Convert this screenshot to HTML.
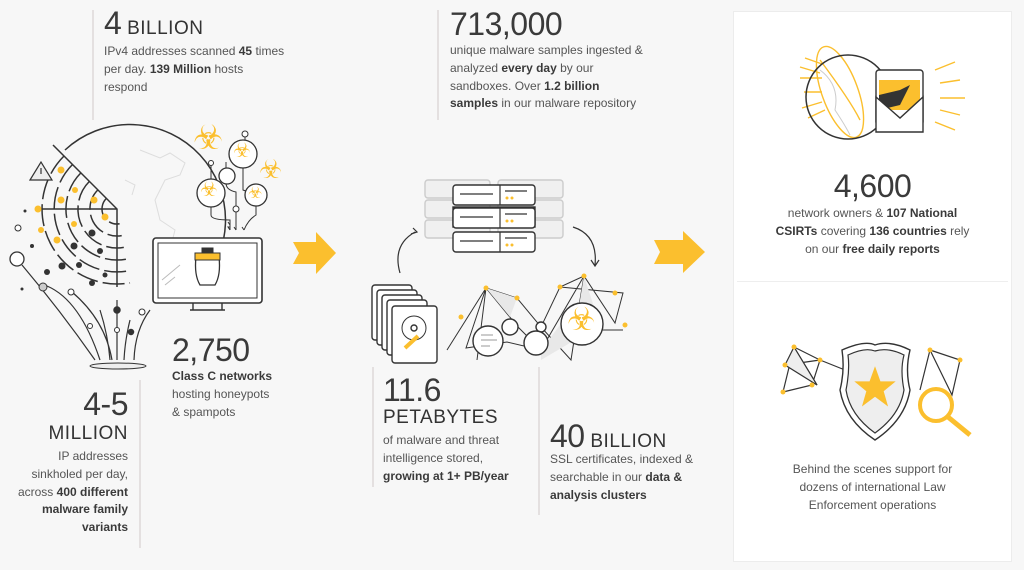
<!DOCTYPE html>
<html><head><meta charset="utf-8">
<style>
*{margin:0;padding:0;box-sizing:border-box}
body{width:1024px;height:570px;background:#f7f7f7;font-family:"Liberation Sans",sans-serif;color:#4a4a4a;position:relative;overflow:hidden}
.a{position:absolute}
.t{font-size:12px;line-height:17.8px;color:#555;letter-spacing:0;white-space:nowrap}
.t b{color:#3a3a3a}
.n{font-size:32px;font-weight:300;color:#3a3a3a;line-height:1;letter-spacing:-.5px}
.u{font-size:19px;color:#333;letter-spacing:.5px}
.vl{position:absolute;width:2px;background:#e4e0e0}
.card{position:absolute;left:733px;top:11px;width:279px;height:551px;background:#fff;border:1px solid #ececec}
.c{text-align:center}
</style></head><body>

<div class="vl" style="left:92px;top:10px;height:110px"></div>
<div class="a" style="left:104px;top:7px"><span class="n">4</span><span class="u"> BILLION</span></div>
<div class="a t" style="left:104px;top:43px">IPv4 addresses scanned <b>45</b> times<br>per day. <b>139 Million</b> hosts<br>respond</div>

<div class="vl" style="left:437px;top:10px;height:110px"></div>
<div class="a n" style="left:450px;top:8px">713,000</div>
<div class="a t" style="left:450px;top:42px">unique malware samples ingested &amp;<br>analyzed <b>every day</b> by our<br>sandboxes. Over <b>1.2 billion</b><br><b>samples</b> in our malware repository</div>

<div class="a n" style="left:172px;top:334px">2,750</div>
<div class="a t" style="left:172px;top:368px"><b>Class C networks</b><br>hosting honeypots<br>&amp; spampots</div>

<div class="vl" style="left:139px;top:380px;height:168px"></div>
<div class="a n" style="left:20px;top:388px;width:108px;text-align:right">4-5</div>
<div class="a u" style="left:20px;top:423px;width:108px;text-align:right">MILLION</div>
<div class="a t" style="left:0px;top:448px;width:128px;text-align:right">IP addresses<br>sinkholed per day,<br>across <b>400 different</b><br><b>malware family</b><br><b>variants</b></div>

<div class="vl" style="left:372px;top:367px;height:120px"></div>
<div class="a n" style="left:383px;top:374px">11.6</div>
<div class="a u" style="left:383px;top:407px">PETABYTES</div>
<div class="a t" style="left:383px;top:432px">of malware and threat<br>intelligence stored,<br><b>growing at 1+ PB/year</b></div>

<div class="vl" style="left:538px;top:367px;height:148px"></div>
<div class="a" style="left:550px;top:420px"><span class="n">40</span><span class="u"> BILLION</span></div>
<div class="a t" style="left:550px;top:451px">SSL certificates, indexed &amp;<br>searchable in our <b>data &amp;</b><br><b>analysis clusters</b></div>

<!-- arrows -->
<svg class="a" style="left:290px;top:230px" width="50" height="50"><path d="M3 12H26V2L46 23L26 44V34H3L9 23Z" fill="#fbbf2e"/></svg>
<svg class="a" style="left:651px;top:230px" width="56" height="46"><path d="M3 10H32V1L54 22L32 43V34H3L9 22Z" fill="#fbbf2e"/></svg>

<!-- left illustration (svg origin at page 0,120) -->
<svg class="a" style="left:0;top:120px" width="300" height="250" fill="none" stroke="#333" stroke-width="1.5">
<path d="M65 30 A92 92 0 0 1 195 170" />
<g stroke="#ddd" stroke-width="1"><path d="M140 30 l20 8 l10 -5 l15 10 l-5 12 l-15 5 l-10 20 l5 20 l15 10 l-5 20"/><path d="M125 60 l10 5 l-3 10"/></g>
<g stroke-dasharray="22 5">
<path d="M106.4 78.4 A15 15 0 0 0 119.6 103.8"/>
<path d="M97.9 69.9 A27 27 0 0 0 121.7 115.6"/>
<path d="M89.4 61.4 A39 39 0 0 0 123.8 127.4"/>
<path d="M80.9 52.9 A51 51 0 0 0 125.9 139.2"/>
<path d="M72.5 44.5 A63 63 0 0 0 127.9 151"/>
<path d="M64 36 A75 75 0 0 0 130 162.9"/>
</g>
<path d="M53 25 L117 89 V167 M38 89 H117"/>
<path d="M30 60 L41 42 L52 60Z" fill="#eee" stroke-width="1.2"/>
<path d="M41 48 V54" stroke-width="1.2"/>
<g fill="#fbbf2e" stroke="none"><circle cx="61" cy="50" r="3.5"/><circle cx="75" cy="70" r="3"/><circle cx="61" cy="80" r="3.5"/><circle cx="94" cy="80" r="3.5"/><circle cx="38" cy="89" r="3.5"/><circle cx="105" cy="97" r="3.5"/><circle cx="41" cy="110" r="3"/><circle cx="74" cy="104" r="3"/><circle cx="57" cy="120" r="3.5"/></g>
<g fill="#333" stroke="none"><circle cx="92" cy="113" r="3.5"/><circle cx="74" cy="126" r="3.5"/><circle cx="100" cy="131" r="3"/><circle cx="62" cy="146" r="3.5"/><circle cx="79" cy="145" r="3"/><circle cx="47" cy="152" r="3"/><circle cx="92" cy="163" r="3"/><circle cx="105" cy="155" r="2.5"/><circle cx="25" cy="91" r="1.5"/><circle cx="32" cy="126" r="2"/><circle cx="22" cy="169" r="1.5"/></g>
<circle cx="18" cy="108" r="3" fill="#fff" stroke-width="1"/>
<circle cx="17" cy="139" r="7" fill="#fff" stroke-width="1.3"/>
<path d="M22 145 Q60 190 95 240M47 166 Q80 180 100 240M72 172 Q105 200 112 240M117 180 V240M130 200 Q125 220 124 240M150 190 Q135 210 134 240M100 190 Q108 215 110 240" stroke-width="1.2"/>
<circle cx="43" cy="167" r="4" fill="#ccc" stroke-width="1"/><circle cx="71" cy="172" r="3" fill="#fff" stroke-width="1"/><circle cx="117" cy="190" r="3" fill="#333"/><circle cx="142" cy="192" r="3" fill="#fff" stroke-width="1"/><circle cx="90" cy="206" r="2.5" fill="#fff" stroke-width="1"/><circle cx="117" cy="210" r="2.5" fill="#fff" stroke-width="1"/><circle cx="131" cy="212" r="2.5" fill="#333"/>
<path d="M211 45 V65 M245 13 V20 M226 42 V63 Q226 70 236 72 V110 M211 87 V95 Q211 100 230 100 V110 M256 86 V95 Q248 100 244 110 M243 48 V70 Q255 75 256 64" stroke-width="1"/>
<circle cx="211" cy="73" r="14" fill="#fff" stroke-width="1.3"/><circle cx="243" cy="34" r="14" fill="#fff" stroke-width="1.3"/><circle cx="256" cy="75" r="11" fill="#fff" stroke-width="1.3"/><circle cx="227" cy="56" r="8" fill="#fff" stroke-width="1.3"/>
<circle cx="245" cy="14" r="3" fill="#fff" stroke-width="1"/><circle cx="211" cy="43" r="2.5" fill="#fff" stroke-width="1"/><circle cx="236" cy="89" r="3" fill="#fff" stroke-width="1"/>
<path d="M230 105 l-2 -3 M230 110 l-2 -3 l2 0 M236 110 l-2 -3 M244 110 l-2 -3" stroke-width="1"/>
</svg>
<div class="a" style="left:193px;top:121px;font-size:34px;color:#fbbf2e;line-height:1">☣</div>
<div class="a" style="left:200px;top:180px;font-size:20px;color:#fbbf2e;line-height:1">☣</div>
<div class="a" style="left:233px;top:141px;font-size:20px;color:#fbbf2e;line-height:1">☣</div>
<div class="a" style="left:248px;top:186px;font-size:16px;color:#fbbf2e;line-height:1">☣</div>
<div class="a" style="left:259px;top:156px;font-size:26px;color:#fbbf2e;line-height:1">☣</div>
<svg class="a" style="left:150px;top:235px" width="120" height="80" fill="none" stroke="#333">
<rect x="3" y="3" width="109" height="65" rx="3" fill="#fff" stroke-width="1.6"/>
<rect x="8" y="8" width="99" height="55" stroke-width="1"/>
<path d="M43 75 V68 M72 75 V68 M40 75 H75" stroke-width="1.4"/>
<path d="M12 45 L30 30 M15 50 L25 42" stroke="#bbb"/>
<path d="M46 22 Q44 40 50 50 H65 Q71 40 69 22Z" fill="#fff" stroke-width="1.3"/>
<path d="M45 18 H70 V25 H45Z" fill="#fbbf2e" stroke-width="1"/>
<path d="M52 13 H63 V18 H52Z" fill="#333"/>
</svg>
<svg class="a" style="left:85px;top:360px" width="70" height="15"><ellipse cx="33" cy="6" rx="28" ry="3" fill="#eee" stroke="#333" stroke-width="1"/></svg>

<!-- middle illustration -->
<svg class="a" style="left:360px;top:170px" width="300" height="200" fill="none" stroke="#333" stroke-width="1.4">
<g fill="#f0f0f0" stroke="#ccc"><rect x="65" y="10" width="65" height="18" rx="3"/><rect x="65" y="30" width="65" height="18" rx="3"/><rect x="65" y="50" width="65" height="18" rx="3"/><rect x="138" y="10" width="65" height="18" rx="3"/><rect x="138" y="30" width="65" height="18" rx="3"/><rect x="138" y="50" width="65" height="18" rx="3"/></g>
<rect x="93" y="37" width="82" height="20" fill="#333"/>
<g fill="#fff"><rect x="93" y="15" width="82" height="20" rx="3"/><rect x="93" y="38" width="82" height="20" rx="3"/><rect x="93" y="62" width="82" height="20" rx="3"/></g>
<path d="M140 15 V35 M140 38 V58 M140 62 V82 M100 24 H133 M100 47 H133 M100 71 H133 M145 21 H167 M145 44 H167 M145 68 H167" stroke-width="1.2"/>
<g fill="#fbbf2e" stroke="none"><circle cx="147" cy="28" r="1.5"/><circle cx="152" cy="28" r="1.5"/><circle cx="147" cy="51" r="1.5"/><circle cx="152" cy="51" r="1.5"/><circle cx="147" cy="75" r="1.5"/><circle cx="152" cy="75" r="1.5"/></g>
<path d="M40 103 Q32 75 55 62 M53 58 L57 62 L51 64" stroke-width="1.2"/>
<path d="M213 57 Q238 65 235 95 M231 90 L235 96 L239 90" stroke-width="1.2"/>
<g fill="#fff"><rect x="12" y="115" width="40" height="55" rx="3"/><rect x="17" y="120" width="40" height="55" rx="3"/><rect x="22" y="125" width="40" height="55" rx="3"/><rect x="27" y="130" width="40" height="55" rx="3"/><rect x="32" y="136" width="45" height="57" rx="3"/></g>
<circle cx="54" cy="158" r="12" fill="#fff" stroke-width="1"/><circle cx="54" cy="158" r="3"/>
<path d="M45 178 L58 166" stroke="#fbbf2e" stroke-width="4"/>
<g stroke-width="1"><path d="M126 118 L158 157 L181 180 L147 172 L106 178 L126 118 L117 190 M126 118 L87 180 M126 118 L157 128 L181 157 L200 117 L224 106 L211 190 L181 157 M200 117 L263 123 L255 153 L224 106 L181 180 M224 106 L215 160 L263 160"/></g>
<path d="M126 118 L157 128 L150 147Z M181 180 L200 155 L215 170 L181 190Z M224 106 L235 140 L215 160Z" fill="#e8e8e8" stroke="none"/>
<circle cx="150" cy="157" r="8" fill="#fff"/><circle cx="181" cy="157" r="5" fill="#fff"/>
<circle cx="128" cy="171" r="15" fill="#fff"/><path d="M121 165 H133 M121 170 H137 M121 176 H130" stroke="#999" stroke-width="1"/>
<circle cx="176" cy="173" r="12" fill="#fff"/>
<circle cx="222" cy="154" r="21" fill="#fff"/>
<g fill="#fbbf2e" stroke="none"><circle cx="126" cy="118" r="2.5"/><circle cx="157" cy="128" r="2.5"/><circle cx="200" cy="117" r="2.5"/><circle cx="224" cy="106" r="2.5"/><circle cx="255" cy="123" r="2.5"/><circle cx="265" cy="155" r="2.5"/><circle cx="101" cy="147" r="2.5"/></g>
</svg>
<div class="a" style="left:567px;top:303px;font-size:32px;color:#fbbf2e;line-height:1">☣</div>

<!-- card -->
<div class="card"></div>
<div class="a" style="left:737px;top:281px;width:271px;height:1px;background:#eee"></div>
<svg class="a" style="left:780px;top:40px" width="190" height="110" fill="none" stroke="#333">
<g stroke="#fbbf2e" stroke-width="1.4"><path d="M20 38 H42 M24 52 H42 M20 27 L40 33 M22 68 L42 62 M28 78 L45 70 M25 18 L42 24 M155 30 L175 22 M160 43 L180 40 M160 58 L185 58 M160 70 L180 75 M155 82 L175 90"/>
<ellipse cx="60" cy="52" rx="18" ry="48" transform="rotate(-20 60 52)"/><path d="M40 20 Q70 60 80 80"/></g>
<circle cx="68" cy="57" r="42" stroke-width="1.5"/>
<path d="M40 30 Q60 45 55 70 Q65 85 70 95" stroke="#ccc"/>
<rect x="96" y="30" width="47" height="55" rx="3" fill="#fff" stroke-width="1.4"/>
<path d="M99 40 H140 V70 H99Z" fill="#fbbf2e" stroke="none"/>
<path d="M99 55 L120 50 L130 45 L120 65 L99 70Z" fill="#333" stroke="none"/>
<path d="M96 57 L120 78 L143 57 V92 H96Z" fill="#fff" stroke-width="1.4"/>
</svg>
<div class="a n c" style="left:733px;top:170px;width:279px">4,600</div>
<div class="a t c" style="left:733px;top:205px;width:279px">network owners &amp; <b>107 National<br>CSIRTs</b> covering <b>136 countries</b> rely<br>on our <b>free daily reports</b></div>
<svg class="a" style="left:780px;top:340px" width="200" height="105" fill="none" stroke="#333" stroke-width="1.2">
<path d="M14 7 L40 20 L32 45 L3 52 L14 7 L37 45 M5 25 L40 20 M40 20 L65 30 M150 10 L180 20 L172 55 L150 10 L140 50" />
<path d="M5 25 L14 7 L37 45Z" fill="#eee"/>
<g fill="#fbbf2e" stroke="none"><circle cx="14" cy="7" r="2.5"/><circle cx="40" cy="20" r="2.5"/><circle cx="32" cy="45" r="2.5"/><circle cx="3" cy="52" r="2.5"/><circle cx="5" cy="25" r="2.5"/><circle cx="150" cy="10" r="2.5"/><circle cx="180" cy="20" r="2.5"/></g>
<path d="M62 10 Q85 0 95 5 Q110 0 130 10 Q125 30 130 50 Q125 80 95 100 Q65 80 60 50 Q65 30 62 10Z" fill="#fff" stroke-width="1.4"/>
<path d="M68 15 Q85 7 95 11 Q108 7 124 15 Q120 30 124 50 Q120 75 95 93 Q70 75 66 50 Q70 30 68 15Z" fill="#eee"/>
<path d="M95 28 L100 42 L114 42 L103 51 L107 65 L95 56 L83 65 L87 51 L76 42 L90 42Z" fill="#fbbf2e" stroke="#fbbf2e"/>
<circle cx="156" cy="65" r="16" fill="#fff" stroke="#fbbf2e" stroke-width="4"/>
<path d="M168 77 L190 95" stroke="#fbbf2e" stroke-width="5"/>
</svg>
<div class="a t c" style="left:733px;top:461px;width:279px">Behind the scenes support for<br>dozens of international Law<br>Enforcement operations</div>
</body></html>
